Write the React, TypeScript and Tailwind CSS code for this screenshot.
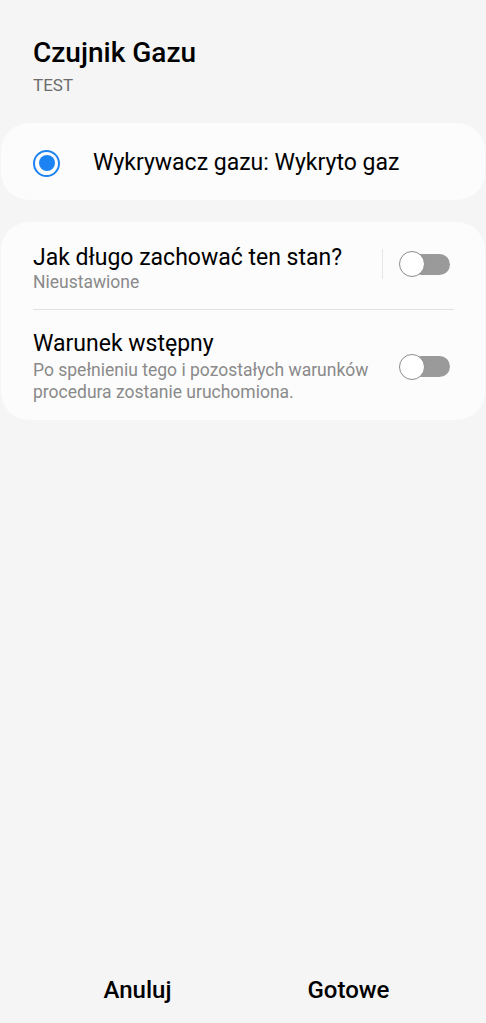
import { useState } from "react";

function Toggle({ on, className = "" }: { on: boolean; className?: string }) {
  return (
    <div className={`relative h-[26px] w-[51px] shrink-0 ${className}`}>
      <div className="absolute top-[2.5px] right-0 left-[12px] h-[21px] rounded-full bg-[#9a9a9a]" />
      <div className="absolute top-0 left-0 h-[26px] w-[26px] rounded-full border-[1.5px] border-[#8c8c8c] bg-white" />
      {on && <span className="sr-only">on</span>}
    </div>
  );
}

export default function App() {
  const [selected] = useState(true);

  return (
    <div
      className="flex h-[1023px] w-[486px] flex-col bg-[#f5f5f5] text-black"
      style={{ fontFamily: "Roboto, 'Noto Sans', sans-serif" }}
    >
      <div className="px-[33px] pt-[37px]">
        <h1 className="text-[28px] leading-[32px] font-medium">Czujnik Gazu</h1>
        <p className="mt-[6px] text-[17px] leading-[20px] text-[#6b6b6b]">TEST</p>
      </div>

      <div className="mx-[1px] mt-[28px] flex h-[77px] items-center rounded-[28px] bg-[#fcfcfc] px-[32px] pt-[3px]">
        <div className="flex h-[27px] w-[27px] items-center justify-center rounded-full border-2 border-[#1d83f2]">
          {selected && <div className="h-[16px] w-[16px] rounded-full bg-[#1d83f2]" />}
        </div>
        <span className="ml-[33px] text-[23px] leading-[28px]">Wykrywacz gazu: Wykryto gaz</span>
      </div>

      <div className="mx-[1px] mt-[22px] rounded-[28px] bg-[#fcfcfc] pr-[31px] pl-[32px] pt-[22px] pb-[17px]">
        <div className="flex items-center pb-[17px]">
          <div className="flex-1">
            <p className="text-[23px] leading-[28px]">Jak długo zachować ten stan?</p>
            <p className="text-[17.5px] leading-[20px] text-[#8a8a8a]">Nieustawione</p>
          </div>
          <div className="mr-[16px] mb-[8px] h-[30px] w-px bg-[#e6e6e6]" />
          <Toggle on={false} className="mr-[4px] mb-[8px]" />
        </div>
        <div className="h-px bg-[#e2e2e2]" />
        <div className="flex items-center pt-[20px]">
          <div className="flex-1">
            <p className="text-[23px] leading-[28px]">Warunek wstępny</p>
            <p className="mt-[1px] text-[17.5px] leading-[22px] text-[#8a8a8a]">
              Po spełnieniu tego i pozostałych warunków
              <br />
              procedura zostanie uruchomiona.
            </p>
          </div>
          <Toggle on={false} className="mr-[4px]" />
        </div>
      </div>

      <div className="flex-1" />

      <div className="grid grid-cols-2 px-[32px] pb-[19px] text-[24px] leading-[28px] font-medium">
        <button className="h-[28px] text-center">Anuluj</button>
        <button className="h-[28px] text-center">Gotowe</button>
      </div>
    </div>
  );
}
